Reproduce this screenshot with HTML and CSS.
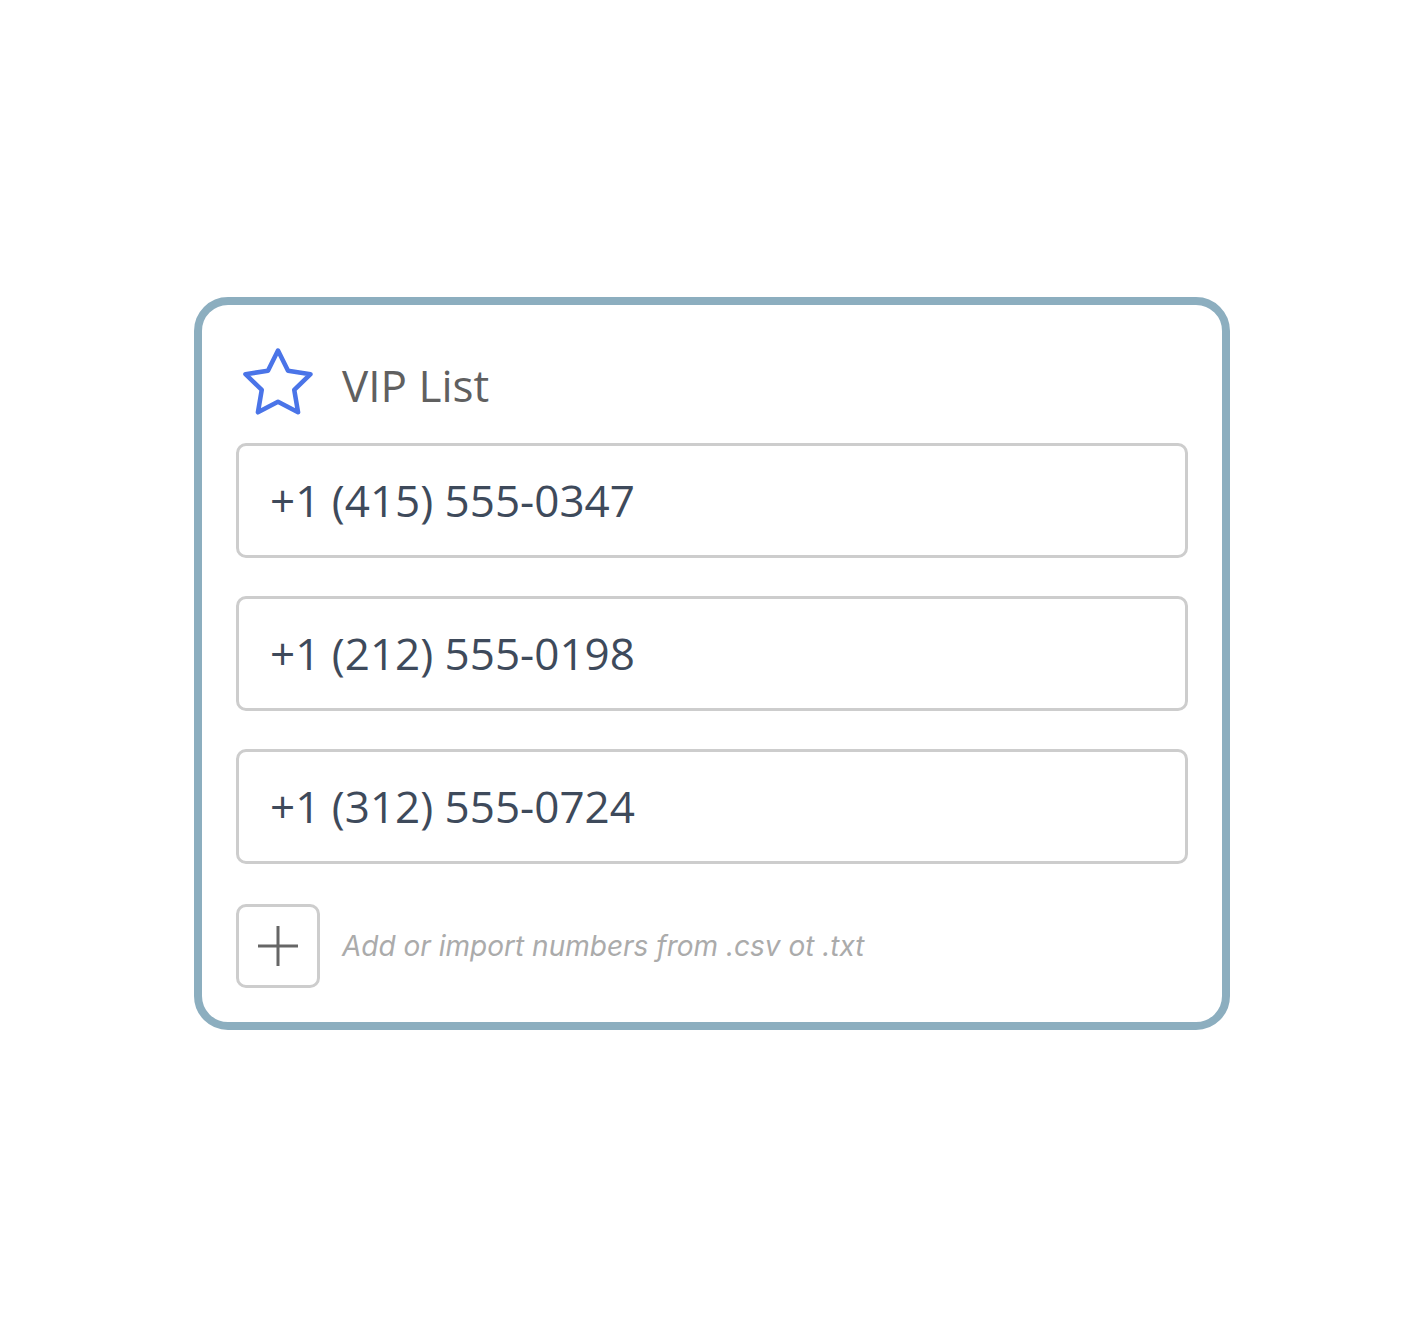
FILE: index.html
```html
<!DOCTYPE html>
<html lang="en">
<head>
    <meta charset="UTF-8">
    <meta name="viewport" content="width=device-width, initial-scale=1.0">
    <title>VIP List</title>
    <link rel="stylesheet" href="styles.css">
</head>
<body>
    <div class="card">
        <div class="card-header">
            <svg class="star" viewBox="0 0 24 24" width="78" height="78" aria-hidden="true">
                <path d="M12 2l3.09 6.26L22 9.27l-5 4.87 1.18 6.88L12 17.77l-6.18 3.25L7 14.14 2 9.27l6.91-1.01L12 2z"/>
            </svg>
            <h1>VIP List</h1>
        </div>

        <div class="number-list">
            <div class="number-field">+1 (415) 555-0347</div>
            <div class="number-field">+1 (212) 555-0198</div>
            <div class="number-field">+1 (312) 555-0724</div>
        </div>

        <div class="add-row">
            <button class="add-button" aria-label="Add number">
                <svg viewBox="0 0 40 40" width="40" height="40" aria-hidden="true">
                    <path d="M20 0v40M0 20h40"/>
                </svg>
            </button>
            <span class="add-hint">Add or import numbers from .csv ot .txt</span>
        </div>
    </div>
</body>
</html>
```

FILE: styles.css
```css
body {
    margin: 0;
    min-height: 100vh;
    display: flex;
    align-items: center;
    justify-content: center;
    background-color: #fff;
    font-family: 'Open Sans', 'Noto Sans', sans-serif;
}
.card {
    width: 1036px;
    box-sizing: border-box;
    border: 8px solid #8caebf;
    border-radius: 34px;
    background-color: #fff;
    padding: 36px 34px 34px;
}
.card-header {
    display: flex;
    align-items: center;
    gap: 25px;
    margin-bottom: 21px;
}
.star {
    display: block;
    margin: 3px 0 0 3px;
    fill: none;
    stroke: #4a74e8;
    stroke-width: 1.4;
    stroke-linejoin: round;
}
h1 {
    margin: 8px 0 0;
    font-size: 44px;
    font-weight: 400;
    color: #606060;
}
.number-list {
    display: flex;
    flex-direction: column;
    gap: 38px;
}
.number-field {
    height: 115px;
    box-sizing: border-box;
    display: flex;
    align-items: center;
    padding: 0 31px;
    border: 3px solid #cdcdcd;
    border-radius: 10px;
    font-size: 44px;
    color: #3e4a5b;
}
.add-row {
    display: flex;
    align-items: center;
    gap: 22px;
    margin-top: 40px;
}
.add-button {
    width: 84px;
    height: 84px;
    box-sizing: border-box;
    display: flex;
    align-items: center;
    justify-content: center;
    padding: 0;
    border: 3px solid #cdcdcd;
    border-radius: 10px;
    background: #fff;
    cursor: pointer;
}
.add-button svg {
    display: block;
    stroke: #666;
    stroke-width: 3;
}
.add-hint {
    font-family: Inter, 'Noto Sans', sans-serif;
    font-style: italic;
    font-size: 28px;
    color: #ababab;
}
```
